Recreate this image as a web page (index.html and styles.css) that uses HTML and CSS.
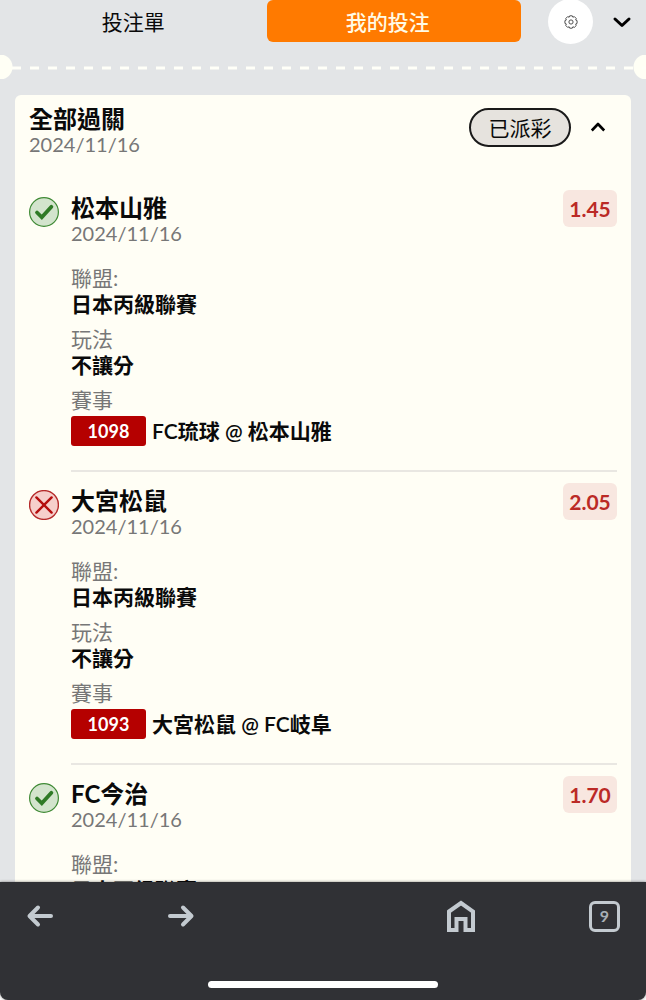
FILE: index.html
```html
<!DOCTYPE html>
<html lang="zh-Hant">
<head>
    <meta charset="UTF-8">
    <meta name="viewport" content="width=device-width, initial-scale=1.0">
    <title>我的投注</title>
    <link rel="stylesheet" href="styles.css">
</head>
<body>
    <!-- shared status icons -->
    <svg class="sprite" aria-hidden="true">
        <symbol id="icon-win" viewBox="0 0 30 30">
            <circle cx="15" cy="15" r="14.4" fill="#d3e4cd" stroke="#3f8a35" stroke-width="1.2"/>
            <path d="M8 15.500l4.800 4.800L22.400 9.800" fill="none" stroke="#2f7a26" stroke-width="3.8" stroke-linecap="round"/>
        </symbol>
        <symbol id="icon-lose" viewBox="0 0 30 30">
            <circle cx="15" cy="15" r="14.4" fill="#f6cfcb" stroke="#b52a2a" stroke-width="1.4"/>
            <path d="M7.4 7.4l15.200 15.200M22.600 7.400L7.400 22.600" fill="none" stroke="#b50d0d" stroke-width="2.4" stroke-linecap="round"/>
        </symbol>
    </svg>

    <main class="slip">
        <header class="tabs">
            <button type="button" class="tab">投注單</button>
            <button type="button" class="tab active">我的投注</button>
            <div class="tools">
                <button type="button" class="gear" aria-label="設定">
                    <svg width="14" height="14" viewBox="0 0 12 12" fill="none" stroke="#444" stroke-width="0.8" stroke-linejoin="round">
                        <path d="M4.900 .7h2.200l.5 1.200 1.300-.5 1.600 1.600-.5 1.300 1.200.5v2.400l-1.200.5.5 1.300-1.600 1.600-1.300-.5-.5 1.200H4.900l-.5-1.200-1.300.5L1.500 9 2 7.700.8 7.200V4.800L2 4.300 1.500 3l1.600-1.600 1.300.5z"/>
                        <circle cx="6" cy="6" r="1.800"/>
                    </svg>
                </button>
                <button type="button" class="plain" aria-label="收起">
                    <svg width="20" height="14" viewBox="0 0 20 14" fill="none" stroke="#000" stroke-width="3" stroke-linecap="round" stroke-linejoin="round">
                        <path d="M3 4l7 6.500L17 4"/>
                    </svg>
                </button>
            </div>
        </header>

        <div class="tear">
            <svg width="100%" height="6" aria-hidden="true">
                <line x1="12" y1="4" x2="100%" y2="4" stroke="#fffff8" stroke-width="3" stroke-dasharray="9 9"/>
            </svg>
        </div>

        <section class="card">
            <div class="card-head">
                <div>
                    <h1 class="title">全部過關</h1>
                    <p class="date">2024/11/16</p>
                </div>
                <span class="status">已派彩</span>
                <button type="button" class="plain" aria-label="收合">
                    <svg width="16" height="12" viewBox="0 0 16 12" fill="none" stroke="#000" stroke-width="2.6" stroke-linejoin="round">
                        <path d="M1.800 9.500L8 3l6.200 6.500"/>
                    </svg>
                </button>
            </div>

            <article class="leg">
                <svg class="result" role="img" aria-label="贏"><use href="#icon-win"/></svg>
                <div class="leg-body">
                    <div class="leg-head">
                        <div>
                            <h2 class="title">松本山雅</h2>
                            <p class="date">2024/11/16</p>
                        </div>
                        <span class="odds">1.45</span>
                    </div>
                    <dl class="info">
                        <dt>聯盟:</dt>
                        <dd>日本丙級聯賽</dd>
                        <dt>玩法</dt>
                        <dd>不讓分</dd>
                        <dt>賽事</dt>
                        <dd class="match"><span class="code">1098</span>FC琉球 @ 松本山雅</dd>
                    </dl>
                </div>
            </article>

            <article class="leg">
                <svg class="result" role="img" aria-label="輸"><use href="#icon-lose"/></svg>
                <div class="leg-body">
                    <div class="leg-head">
                        <div>
                            <h2 class="title">大宮松鼠</h2>
                            <p class="date">2024/11/16</p>
                        </div>
                        <span class="odds">2.05</span>
                    </div>
                    <dl class="info">
                        <dt>聯盟:</dt>
                        <dd>日本丙級聯賽</dd>
                        <dt>玩法</dt>
                        <dd>不讓分</dd>
                        <dt>賽事</dt>
                        <dd class="match"><span class="code">1093</span>大宮松鼠 @ FC岐阜</dd>
                    </dl>
                </div>
            </article>

            <article class="leg">
                <svg class="result" role="img" aria-label="贏"><use href="#icon-win"/></svg>
                <div class="leg-body">
                    <div class="leg-head">
                        <div>
                            <h2 class="title">FC今治</h2>
                            <p class="date">2024/11/16</p>
                        </div>
                        <span class="odds">1.70</span>
                    </div>
                    <dl class="info">
                        <dt>聯盟:</dt>
                        <dd>日本丙級聯賽</dd>
                    </dl>
                </div>
            </article>
        </section>
    </main>

    <nav class="browser-bar">
        <div class="browser-buttons">
            <button type="button" class="plain" aria-label="上一頁">
                <svg width="28" height="24" viewBox="0 0 28 24" fill="none" stroke="#c3cad0" stroke-width="4" stroke-linecap="round" stroke-linejoin="round">
                    <path d="M25 12H4M12 3.500L3.500 12l8.500 8.500"/>
                </svg>
            </button>
            <button type="button" class="plain" aria-label="下一頁">
                <svg width="28" height="24" viewBox="0 0 28 24" fill="none" stroke="#c3cad0" stroke-width="4" stroke-linecap="round" stroke-linejoin="round">
                    <path d="M3 12h21M16 3.500l8.500 8.500-8.500 8.500"/>
                </svg>
            </button>
            <span class="spacer"></span>
            <button type="button" class="plain" aria-label="首頁">
                <svg width="30" height="32" viewBox="0 0 30 32" fill="none" stroke="#c3cad0" stroke-width="4">
                    <path d="M3 11.500L15 3l12 8.500V30h-7.500V19h-9v11H3z"/>
                </svg>
            </button>
            <button type="button" class="tab-count" aria-label="分頁">9</button>
        </div>
        <div class="home-indicator"></div>
    </nav>
</body>
</html>
```
FILE: styles.css
```css
* {
    box-sizing: border-box;
}

body {
    display: flex;
    flex-direction: column;
    height: 100vh;
    margin: 0;
    background: #fff;
    color: #0a0a0a;
    font-family: Lato, "Noto Sans CJK TC", sans-serif;
    font-size: 21px;
}

h1, h2, p, dl, dd {
    margin: 0;
}

button {
    padding: 0;
    border: 0;
    background: none;
    color: inherit;
    font: inherit;
}

svg {
    display: block;
}

.sprite {
    position: absolute;
    width: 0;
    height: 0;
}

.slip {
    flex: 1;
    min-height: 0;
    overflow: hidden;
    background: #e3e5e7;
}

/* top tabs */
.tabs {
    display: flex;
    gap: 6px;
    height: 43px;
    padding-left: 6px;
}

.tab {
    flex: 1;
    height: 42px;
    padding: 0 6px;
    border-radius: 6px;
}

.tab.active {
    padding: 0 12px 0 0;
    background: #ff7a00;
    color: #fffbe6;
    font-weight: 500;
}

.tools {
    display: flex;
    align-items: center;
    justify-content: space-between;
    width: 119px;
    padding: 0 14px 0 21px;
}

.gear {
    display: grid;
    place-items: center;
    width: 45px;
    height: 45px;
    border-radius: 50%;
    background: #fff;
}

/* perforated edge */
.tear {
    display: flex;
    align-items: center;
    height: 24px;
    margin: 12px 0 16px;
    background:
        radial-gradient(circle at 0 50%, #fffff5 12px, transparent 13px),
        radial-gradient(circle at 100% 50%, #fffff5 12px, transparent 13px);
}

.card {
    margin: 0 15px;
    padding: 11px 14px;
    border-radius: 6px;
    background: #fffef5;
}

.card-head {
    display: flex;
    align-items: flex-start;
    margin-bottom: 39px;
}

.card-head > div {
    flex: 1;
}

.card-head .plain {
    margin: 15px 11px 0 19px;
}

.title {
    font-size: 24px;
    line-height: 26px;
    font-weight: 700;
}

.date {
    color: #777;
    font-size: 20px;
    line-height: 24px;
}

.status {
    width: 102px;
    height: 39px;
    margin-top: 2px;
    border: 2px solid #1a1a1a;
    border-radius: 20px;
    background: #e6e3de;
    line-height: 35px;
    text-align: center;
}

/* one selection of the parlay */
.leg {
    display: flex;
    gap: 12px;
}

.result {
    flex: none;
    width: 30px;
    height: 30px;
    margin-top: 2px;
    overflow: visible;
}

.leg-body {
    flex: 1;
    margin-bottom: 16px;
    padding-bottom: 24px;
    border-bottom: 2px solid #e9e7e2;
}

.leg-head {
    display: flex;
    align-items: flex-start;
    justify-content: space-between;
    margin-bottom: 20px;
}

.odds {
    width: 54px;
    height: 37px;
    margin-top: -5px;
    border-radius: 6px;
    background: #f8e7e0;
    color: #bb2a26;
    font-weight: 700;
    line-height: 37px;
    text-align: center;
}

.info dt {
    color: #777;
    line-height: 26px;
}

.info dd {
    margin-bottom: 10px;
    font-weight: 700;
    line-height: 25px;
}

.info .match {
    display: flex;
    align-items: center;
    gap: 6px;
    margin: 3px 0 0;
    font-weight: 600;
    line-height: 30px;
}

.code {
    width: 75px;
    border-radius: 3px;
    background: #b50000;
    color: #fff;
    font-size: 18px;
    font-weight: 700;
    text-align: center;
}

/* browser toolbar */
.browser-bar {
    display: flex;
    flex-direction: column;
    justify-content: space-between;
    height: 118px;
    padding: 18px 26px 12px;
    border-radius: 0 0 8px 8px;
    background: #303135;
    box-shadow: 0 0 3px rgba(0, 0, 0, 0.5);
}

.browser-buttons {
    display: flex;
    align-items: center;
    justify-content: space-between;
}

.spacer {
    width: 24px;
}

.tab-count {
    width: 31px;
    height: 31px;
    border: 3px solid #c3cad0;
    border-radius: 6px;
    color: #a9b0b6;
    font-size: 16px;
    font-weight: 700;
    line-height: 24px;
}

.home-indicator {
    width: 230px;
    height: 7px;
    margin: 0 auto;
    border-radius: 4px;
    background: #fff;
}
```
